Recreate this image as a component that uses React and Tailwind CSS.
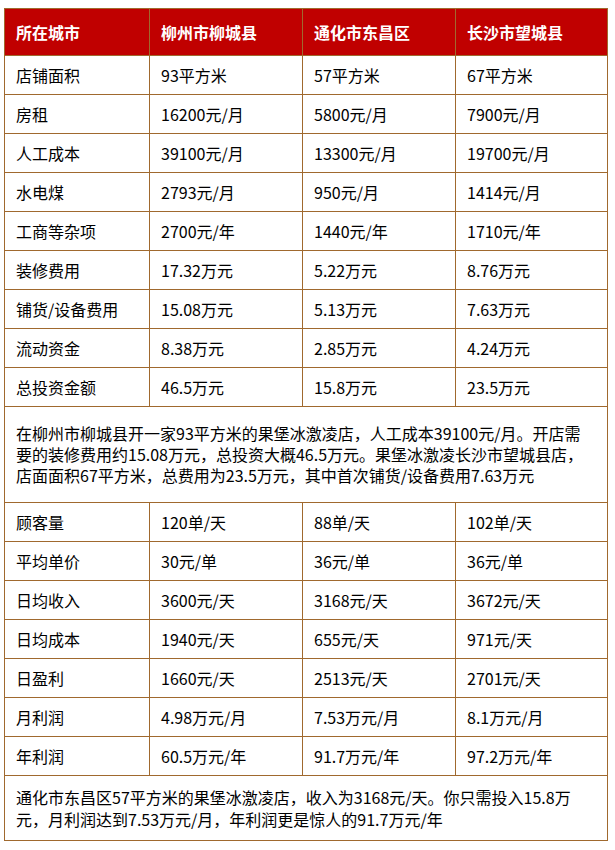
const head = ["所在城市", "柳州市柳城县", "通化市东昌区", "长沙市望城县"];

const costRows = [
  ["店铺面积", "93平方米", "57平方米", "67平方米"],
  ["房租", "16200元/月", "5800元/月", "7900元/月"],
  ["人工成本", "39100元/月", "13300元/月", "19700元/月"],
  ["水电煤", "2793元/月", "950元/月", "1414元/月"],
  ["工商等杂项", "2700元/年", "1440元/年", "1710元/年"],
  ["装修费用", "17.32万元", "5.22万元", "8.76万元"],
  ["铺货/设备费用", "15.08万元", "5.13万元", "7.63万元"],
  ["流动资金", "8.38万元", "2.85万元", "4.24万元"],
  ["总投资金额", "46.5万元", "15.8万元", "23.5万元"],
];

const incomeRows = [
  ["顾客量", "120单/天", "88单/天", "102单/天"],
  ["平均单价", "30元/单", "36元/单", "36元/单"],
  ["日均收入", "3600元/天", "3168元/天", "3672元/天"],
  ["日均成本", "1940元/天", "655元/天", "971元/天"],
  ["日盈利", "1660元/天", "2513元/天", "2701元/天"],
  ["月利润", "4.98万元/月", "7.53万元/月", "8.1万元/月"],
  ["年利润", "60.5万元/年", "91.7万元/年", "97.2万元/年"],
];

const cell = "border border-[#a0692e] px-[11px] h-[39px] align-middle";

function Rows({ rows }) {
  return rows.map((r) => (
    <tr key={r[0]}>
      {r.map((c, i) => (
        <td key={i} className={cell}>
          {c}
        </td>
      ))}
    </tr>
  ));
}

export default function App() {
  return (
    <div
      className="bg-white pt-[8px] pl-[4px] text-[16px] text-black"
      style={{ fontFamily: '"Noto Sans CJK SC", "Liberation Sans", sans-serif' }}
    >
      <table className="border-collapse w-[603px] table-fixed">
        <colgroup>
          <col className="w-[145px]" />
          <col className="w-[153px]" />
          <col className="w-[153px]" />
          <col className="w-[152px]" />
        </colgroup>
        <tbody>
          <tr className="bg-[#c00000] text-white font-bold">
            {head.map((h) => (
              <td key={h} className="border border-[#a0692e] px-[11px] h-[47px] align-middle">
                {h}
              </td>
            ))}
          </tr>
          <Rows rows={costRows} />
          <tr>
            <td colSpan={4} className="border border-[#a0692e] px-[11px] h-[96px] align-middle leading-[21px]">
              在柳州市柳城县开一家93平方米的果堡冰激凌店，人工成本39100元/月。开店需
              <br />
              要的装修费用约15.08万元，总投资大概46.5万元。果堡冰激凌长沙市望城县店，
              <br />
              店面面积67平方米，总费用为23.5万元，其中首次铺货/设备费用7.63万元
            </td>
          </tr>
          <Rows rows={incomeRows} />
          <tr>
            <td colSpan={4} className="border border-[#a0692e] px-[11px] h-[65px] align-middle leading-[22px]">
              通化市东昌区57平方米的果堡冰激凌店，收入为3168元/天。你只需投入15.8万
              <br />
              元，月利润达到7.53万元/月，年利润更是惊人的91.7万元/年
            </td>
          </tr>
        </tbody>
      </table>
    </div>
  );
}
